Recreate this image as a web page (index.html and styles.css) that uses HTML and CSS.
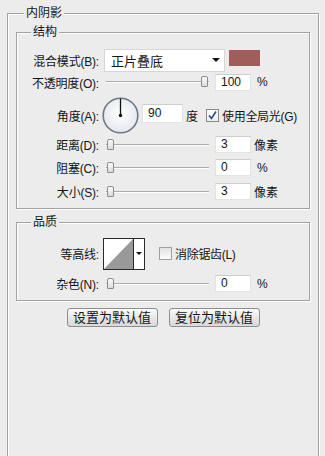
FILE: index.html
```html
<!DOCTYPE html>
<html lang="zh-CN">
<head>
    <meta charset="UTF-8">
    <title>内阴影</title>
    <link rel="stylesheet" href="styles.css">
</head>
<body>
    <fieldset class="panel">
        <legend>内阴影</legend>

        <fieldset class="group structure">
            <legend>结构</legend>

            <div class="row row-blend">
                <label class="lbl">混合模式(B):</label>
                <div class="select">
                    <span>正片叠底</span>
                    <span class="caret"></span>
                </div>
                <span class="swatch"></span>
            </div>

            <div class="row row-opacity">
                <label class="lbl">不透明度(O):</label>
                <div class="slider"><span class="thumb thumb-end"></span></div>
                <span class="field">100</span>
                <span class="unit pct">%</span>
            </div>

            <div class="row row-angle">
                <label class="lbl">角度(A):</label>
                <svg class="dial" width="37" height="37" viewBox="0 0 37 37">
                    <defs>
                        <radialGradient id="dialFill" cx="50%" cy="45%" r="55%">
                            <stop offset="0" stop-color="#ffffff"/>
                            <stop offset="1" stop-color="#e4e7ec"/>
                        </radialGradient>
                    </defs>
                    <circle cx="18.5" cy="18.5" r="17.3" fill="url(#dialFill)" stroke="#6d7889" stroke-width="1.6"/>
                    <line x1="18.5" y1="1.5" x2="18.5" y2="18.5" stroke="#111" stroke-width="1.3"/>
                    <circle cx="18.5" cy="18.5" r="1.7" fill="#111"/>
                </svg>
                <span class="field field-angle">90</span>
                <span class="unit deg">度</span>
                <span class="check">
                    <svg width="13" height="13" viewBox="0 0 13 13">
                        <path d="M3 6.5 L5.5 9.5 L10 2.5" fill="none" stroke="#2c4a86" stroke-width="1.6"/>
                    </svg>
                </span>
                <span class="check-text">使用全局光(G)</span>
            </div>

            <div class="row row-slider row-distance">
                <label class="lbl">距离(D):</label>
                <div class="slider"><span class="thumb"></span></div>
                <span class="field">3</span>
                <span class="unit">像素</span>
            </div>

            <div class="row row-slider row-choke">
                <label class="lbl">阻塞(C):</label>
                <div class="slider"><span class="thumb"></span></div>
                <span class="field">0</span>
                <span class="unit pct">%</span>
            </div>

            <div class="row row-slider row-size">
                <label class="lbl">大小(S):</label>
                <div class="slider"><span class="thumb"></span></div>
                <span class="field">3</span>
                <span class="unit">像素</span>
            </div>
        </fieldset>

        <fieldset class="group quality">
            <legend>品质</legend>

            <div class="row row-contour">
                <label class="lbl">等高线:</label>
                <svg class="contour" width="42" height="32" viewBox="0 0 42 32">
                    <rect x="0.5" y="0.5" width="41" height="31" fill="#fff" stroke="#2a2a2a"/>
                    <polygon points="1,31 30,1 30,31" fill="#999"/>
                    <line x1="30.5" y1="1" x2="30.5" y2="31" stroke="#2a2a2a"/>
                    <polygon points="33,14 39,14 36,17" fill="#111"/>
                </svg>
                <span class="check check-off"></span>
                <span class="check-text">消除锯齿(L)</span>
            </div>

            <div class="row row-slider row-noise">
                <label class="lbl">杂色(N):</label>
                <div class="slider"><span class="thumb"></span></div>
                <span class="field">0</span>
                <span class="unit pct">%</span>
            </div>
        </fieldset>

        <div class="actions">
            <button class="btn">设置为默认值</button>
            <button class="btn">复位为默认值</button>
        </div>
    </fieldset>
</body>
</html>
```

FILE: styles.css
```css
html,
body {
    margin: 0;
    height: 100%;
    overflow: hidden;
}

body {
    background-color: #ececec;
    font-family: "Liberation Sans", "Noto Sans CJK SC", sans-serif;
    font-size: 12px;
    color: #151515;
}

fieldset {
    margin: 0;
    padding: 0;
    border: 1px solid #a2a2a2;
    box-shadow: inset 1px 1px 0 #fff, 1px 1px 0 #fff;
}

legend {
    padding: 0 2px;
    height: 16px;
    line-height: 16px;
    background-color: #ececec;
}

.panel {
    margin: 5px 6px 0 7px;
    padding: 0 8px;
    height: 470px;
}

.panel > legend {
    margin-left: 8px;
}

.group > legend {
    margin-left: 14px;
}

.structure {
    margin-top: 3px;
    padding: 8px 0 7px;
}

.quality {
    margin-top: 5px;
    padding: 7px 0 7px;
}

/* rows */
.row {
    display: flex;
    align-items: center;
    white-space: nowrap;
}

.lbl {
    flex: none;
    width: 82px;
    padding-right: 2px;
    text-align: right;
    letter-spacing: -0.2px;
}

.row-blend {
    height: 24px;
}

.row-opacity {
    height: 20px;
}

.row-angle {
    height: 38px;
    margin-top: 4px;
}

.row-slider {
    height: 19px;
}

.row-distance {
    margin-top: 1px;
}

.row-choke {
    margin-top: 4px;
}

.row-size {
    margin-top: 5px;
}

.row-contour {
    height: 33px;
}

.row-noise {
    margin-top: 4px;
}

/* blend select */
.select {
    box-sizing: border-box;
    display: flex;
    align-items: center;
    justify-content: space-between;
    width: 121px;
    height: 23px;
    margin-left: 3px;
    padding: 0 4px 0 6px;
    background-color: #fff;
    border: 1px solid #d6d6d6;
    font-size: 13px;
}

.caret {
    width: 0;
    height: 0;
    border-left: 4px solid transparent;
    border-right: 4px solid transparent;
    border-top: 4px solid #111;
}

.swatch {
    align-self: flex-start;
    margin: 2px 0 0 4px;
    width: 31px;
    height: 16px;
    background-color: #a15d5b;
}

/* sliders */
.slider {
    position: relative;
    flex: none;
    width: 104px;
    height: 12px;
    margin-left: 4px;
}

.slider::before {
    content: "";
    position: absolute;
    left: 1px;
    right: 0;
    top: 5px;
    border-top: 1px solid #acacac;
    border-bottom: 1px solid #fff;
}

.thumb {
    position: absolute;
    top: 0;
    left: 2px;
    box-sizing: border-box;
    width: 7px;
    height: 11px;
    border: 1px solid #8c8c8c;
    border-radius: 2px 2px 1px 1px;
    background: linear-gradient(#fafafa, #dcdcdc);
}

.thumb-end {
    left: auto;
    right: 1px;
}

/* number fields */
.field {
    box-sizing: border-box;
    flex: none;
    width: 36px;
    height: 17px;
    margin-left: 6px;
    padding-left: 5px;
    line-height: 15px;
    background-color: #fff;
    border: 1px solid #e3e3e3;
    border-top-color: #cdcdcd;
}

.field-angle {
    width: 41px;
    height: 19px;
    line-height: 17px;
    margin: 0 0 4px 3px;
}

.unit {
    margin-left: 3px;
}

.pct {
    margin-left: 6px;
}

.deg {
    margin-left: 3px;
}

.dial {
    flex: none;
    margin-left: 1px;
}

/* checkboxes */
.check {
    box-sizing: border-box;
    flex: none;
    width: 13px;
    height: 13px;
    margin-left: 8px;
    border: 1px solid #8a8a8a;
    background: linear-gradient(#ffffff, #eeeeee);
}

.check svg {
    display: block;
    margin: -1px;
}

.check-off {
    margin-left: 14px;
    border-color: #a0a0a0;
    background: linear-gradient(#e2e2e2, #fbfbfb);
}

.check-text {
    margin-left: 3px;
    letter-spacing: -0.3px;
}

.contour {
    flex: none;
    margin-left: 2px;
}

/* buttons */
.actions {
    display: flex;
    justify-content: center;
    gap: 11px;
    margin-top: 7px;
}

.btn {
    width: 91px;
    height: 19px;
    padding: 0;
    font: inherit;
    font-size: 13px;
    line-height: 17px;
    color: #151515;
    border: 1px solid #8e8e8e;
    border-radius: 3px;
    background: linear-gradient(#fbfbfb, #e6e6e6 55%, #d9d9d9);
}
```
